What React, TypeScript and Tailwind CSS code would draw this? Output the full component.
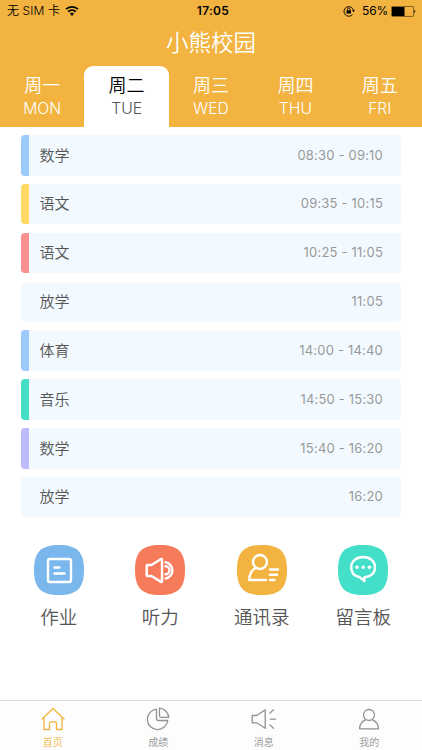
import React from "react";

const days = [
  { zh: "周一", en: "MON" },
  { zh: "周二", en: "TUE", active: true },
  { zh: "周三", en: "WED" },
  { zh: "周四", en: "THU" },
  { zh: "周五", en: "FRI" },
];

const lessons = [
  { name: "数学", time: "08:30 - 09:10", bar: "bg-[#9dcafd]" },
  { name: "语文", time: "09:35 - 10:15", bar: "bg-[#ffd965]" },
  { name: "语文", time: "10:25 - 11:05", bar: "bg-[#fd9090]" },
  { name: "放学", time: "11:05", bar: "" },
  { name: "体育", time: "14:00 - 14:40", bar: "bg-[#9dcafd]" },
  { name: "音乐", time: "14:50 - 15:30", bar: "bg-[#44dfc5]" },
  { name: "数学", time: "15:40 - 16:20", bar: "bg-[#bdbbfd]" },
  { name: "放学", time: "16:20", bar: "" },
];

const tile = "M25 0C43 0 50 7 50 25S43 50 25 50 0 43 0 25 7 0 25 0Z";

const shortcuts = [
  {
    label: "作业",
    fill: "#7ab7ec",
    icon: (
      <>
        <rect x="14" y="14" width="23" height="23" rx="2" />
        <path d="M20.5 22.5h5M20.5 28.5h10" />
      </>
    ),
  },
  {
    label: "听力",
    fill: "#f67b5a",
    icon: (
      <>
        <path d="M12.500 20h4L26 14q1-.5 1 .7v21.600q0 1.200-1 .6L16.500 31h-4q-.8 0-.8-.8v-9.400q0-.8.8-.8Z" />
        <path d="M30.500 21.300a4 4 0 0 1 0 8M30.500 17.300a8.200 8.200 0 0 1 0 16.200" />
      </>
    ),
  },
  {
    label: "通讯录",
    fill: "#f2b340",
    icon: (
      <>
        <circle cx="23" cy="17" r="7" />
        <path d="M18.500 23C14 25.500 12.300 29 12.300 35H29M33 24.500h8M33 29.700h7M33 35h4.500" />
      </>
    ),
  },
  {
    label: "留言板",
    fill: "#44dfc9",
    icon: (
      <>
        <path d="M25.200 12c6.800 0 11.800 4.300 11.800 10.200 0 4.500-2.500 8-7 9.300l-3.700.7.200 3.800-5.200-4C16.300 31 13.200 27.200 13.200 22.200c0-5.900 5.200-10.200 12-10.200Z" />
        <g fill="#fff" stroke="none">
          <circle cx="19" cy="22.200" r="1.800" />
          <circle cx="25.200" cy="22.200" r="1.800" />
          <circle cx="31.400" cy="22.200" r="1.800" />
        </g>
      </>
    ),
  },
];

const navItems = [
  {
    label: "首页",
    color: "text-[#f2b340]",
    icon: <path d="M1 12 12 1.500 23 12M3 10.500v12h5.500v-6.200q0-1.500 1.500-1.500h4q1.500 0 1.500 1.500v6.200H21v-12" />,
  },
  {
    label: "成绩",
    color: "text-[#929292]",
    icon: <path d="M10.500 2.200A10.200 10.200 0 1 0 21.700 13.500H12.500q-2 0-2-2ZM13.500 1.200A10 10 0 0 1 22.700 10.300H15q-1.500 0-1.500-1.500Z" />,
  },
  {
    label: "消息",
    color: "text-[#929292]",
    icon: <path d="M.2 8.500v7.300h4.500L13.200 21.300V2.800L4.700 8.500ZM18 6 21.500 2.800M18.500 12.200h5M18 18 21.500 21.200" />,
  },
  {
    label: "我的",
    color: "text-[#929292]",
    icon: (
      <>
        <circle cx="12" cy="8" r="5.500" />
        <path d="M8.500 12.800C4.500 14.500 2.600 17.500 2.600 21.800h18.800c0-4.300-1.900-7.300-5.900-9" />
      </>
    ),
  },
];

function StatusBar() {
  return (
    <div className="flex h-[22px] items-center text-[12px] text-black">
      <div className="flex flex-1 items-center pl-[7px]">
        <span className="font-[350] tracking-[0.1px]">无 SIM 卡</span>
        <svg className="ml-[5px]" width="14" height="12" viewBox="0 0 14 12" fill="none" stroke="currentColor" strokeWidth="1.800">
          <path d="M1 4.200a8.700 8.700 0 0 1 12 0M3.200 6.700a5.500 5.500 0 0 1 7.600 0" />
          <path d="m7 11 2.200-2.400a3 3 0 0 0-4.400 0Z" fill="currentColor" stroke="none" />
        </svg>
      </div>
      <span className="pl-[3px] text-[12px] font-semibold tracking-[0.3px]">17:05</span>
      <div className="flex flex-1 items-center justify-end pr-[6px]">
        <svg className="mr-[7px]" width="12" height="12" viewBox="0 0 12 12" fill="none" stroke="currentColor">
          <path d="M9.500 9.500A4.800 4.800 0 1 1 10.500 5.500" strokeWidth=".9" />
          <path d="M9 5.200h3l-1.500 2Z" fill="currentColor" stroke="none" />
          <rect x="3.500" y="5.300" width="4.500" height="3.200" fill="currentColor" stroke="none" />
          <path d="M4.500 5.500V4.200a1.250 1.250 0 0 1 2.500 0v1.300" strokeWidth=".8" />
        </svg>
        <span className="mr-[3px] tracking-[-0.2px]">56%</span>
        <svg width="25" height="11" viewBox="0 0 25 11">
          <rect x=".4" y=".4" width="22.200" height="10" rx="1" fill="none" stroke="#5e4517" strokeWidth=".8" />
          <path d="M1 1h12.500v9H1Z" />
          <path d="M23.400 3.800q1.800 1.600 0 3.200Z" />
        </svg>
      </div>
    </div>
  );
}

export default function App() {
  return (
    <div className="flex h-[750px] w-[422px] flex-col overflow-hidden bg-white font-[Inter,'Noto_Sans_CJK_SC',sans-serif]">
      <header className="h-[126.5px] bg-[#f2b340]">
        <StatusBar />
        <h1 className="flex h-[44px] items-center justify-center pb-[3px] text-[22.5px] font-[350] text-white">小熊校园</h1>
        <div className="grid h-[60.5px] grid-cols-5">
          {days.map((d) => (
            <div
              key={d.en}
              className={
                "flex flex-col items-center rounded-t-[9px] pt-[8px] " +
                (d.active ? "bg-white text-black" : "text-white")
              }
            >
              <span className="text-[18px] leading-[23px] font-[350]">{d.zh}</span>
              <span className={"pt-[0.5px] text-[15.7px] leading-[22px] font-[350] " + (d.active ? "text-[#555]" : "")}>{d.en}</span>
            </div>
          ))}
        </div>
      </header>

      <main className="flex flex-1 flex-col">
        <ul className="flex flex-col gap-[8.350px] px-[21px] pt-[8.500px]">
          {lessons.map((l, i) => (
            <li key={i} className="flex h-[40.500px] items-center overflow-hidden rounded-[4px] bg-[#f2f9ff] pr-[18px]">
              <span className={"h-full w-[8px] " + l.bar} />
              <span className="ml-[10.500px] flex-1 pt-[1px] text-[15px] font-[350] text-[#555]">{l.name}</span>
              <span className="text-[13px] tracking-[0.200px] text-[#999]">{l.time}</span>
            </li>
          ))}
        </ul>
        <div className="mt-[28px] grid grid-cols-4 px-[8px]">
          {shortcuts.map((s) => (
            <div key={s.label} className="flex flex-col items-center">
              <svg width="50" height="50" viewBox="0 0 50 50" fill="none" stroke="#fff" strokeWidth="2.400" strokeLinecap="round" strokeLinejoin="round">
                <path d={tile} fill={s.fill} stroke="none" />
                {s.icon}
              </svg>
              <span className="mt-[8.500px] text-[18.500px] leading-[26px] font-[350] text-[#555]">{s.label}</span>
            </div>
          ))}
        </div>
      </main>

      <nav className="grid h-[50px] grid-cols-4 border-t border-[#dedede] bg-[#fdfdfd]">
        {navItems.map((n) => (
          <div key={n.label} className={"flex flex-col items-center pt-[6px] " + n.color}>
            <svg className="overflow-visible" width="24" height="24" viewBox="0 0 24 24" fill="none" stroke="currentColor" strokeWidth="1.300" strokeLinecap="round" strokeLinejoin="round">
              {n.icon}
            </svg>
            <span className="mt-[4px] text-[10px] leading-[15px] font-[350]">{n.label}</span>
          </div>
        ))}
      </nav>
    </div>
  );
}
